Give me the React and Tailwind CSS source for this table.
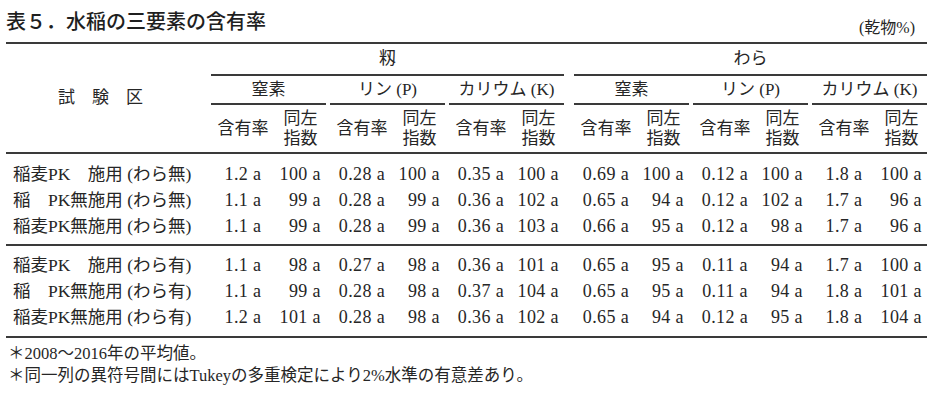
import React from 'react'

/* 表5 水稲の三要素の含有率 */
const SERIF = { fontFamily: '"Liberation Serif", "Noto Sans CJK JP", serif' }
const GOTHIC = { fontFamily: '"Noto Sans CJK JP", "Noto Sans", sans-serif' }

const ELEMENTS = ['窒素', 'リン (P)', 'カリウム (K)']

const ROWS_A = [
  { label: '稲麦PK　施用 (わら無)', v: ['1.2 a', '100 a', '0.28 a', '100 a', '0.35 a', '100 a', '0.69 a', '100 a', '0.12 a', '100 a', '1.8 a', '100 a'] },
  { label: '稲　PK無施用 (わら無)', v: ['1.1 a', '99 a', '0.28 a', '99 a', '0.36 a', '102 a', '0.65 a', '94 a', '0.12 a', '102 a', '1.7 a', '96 a'] },
  { label: '稲麦PK無施用 (わら無)', v: ['1.1 a', '99 a', '0.28 a', '99 a', '0.36 a', '103 a', '0.66 a', '95 a', '0.12 a', '98 a', '1.7 a', '96 a'] },
]

const ROWS_B = [
  { label: '稲麦PK　施用 (わら有)', v: ['1.1 a', '98 a', '0.27 a', '98 a', '0.36 a', '101 a', '0.65 a', '95 a', '0.11 a', '94 a', '1.7 a', '100 a'] },
  { label: '稲　PK無施用 (わら有)', v: ['1.1 a', '99 a', '0.28 a', '98 a', '0.37 a', '104 a', '0.65 a', '95 a', '0.11 a', '94 a', '1.8 a', '101 a'] },
  { label: '稲麦PK無施用 (わら有)', v: ['1.2 a', '101 a', '0.28 a', '98 a', '0.36 a', '102 a', '0.65 a', '94 a', '0.12 a', '95 a', '1.8 a', '104 a'] },
]

function HeadBlock({ title }) {
  return (
    <div className="w-[353px] flex flex-col">
      <div className="h-[32px] flex items-center justify-center border-b-2 border-[#3a3a3a]">{title}</div>
      <div className="flex gap-[4px]">
        {ELEMENTS.map(el => (
          <div key={el} className="w-[115px] flex flex-col">
            <div className="h-[29px] flex items-center justify-center border-b-2 border-[#3a3a3a]">{el}</div>
            <div className="h-[47px] flex">
              <div className="w-[64px] flex items-center justify-center">含有率</div>
              <div className="w-[51px] flex flex-col items-center justify-center leading-[20px]">
                <span>同左</span>
                <span>指数</span>
              </div>
            </div>
          </div>
        ))}
      </div>
    </div>
  )
}

function DataBlock({ vals }) {
  return (
    <div className="w-[353px] flex gap-[4px]">
      {[0, 1, 2].map(i => (
        <div key={i} className="w-[115px] flex text-[18px] tracking-[0.4px]">
          <div className="w-[64px] text-center whitespace-nowrap">{vals[i * 2]}</div>
          <div className="w-[51px] text-right pr-[5px] whitespace-nowrap">{vals[i * 2 + 1]}</div>
        </div>
      ))}
    </div>
  )
}

function Row({ r }) {
  return (
    <div className="flex h-[26px] items-center">
      <div className="w-[205px] pl-[7px] text-[17.5px] whitespace-nowrap">{r.label}</div>
      <DataBlock vals={r.v.slice(0, 6)} />
      <div className="w-[10px]" />
      <DataBlock vals={r.v.slice(6)} />
    </div>
  )
}

export default function App() {
  return (
    <div className="w-[943px] h-[403px] bg-white text-[#262626] pl-[6px] pr-[16px] overflow-hidden" style={SERIF}>
      {/* ── タイトル ── */}
      <div className="h-[42px] flex justify-between items-start">
        <div className="mt-[7px] text-[20px] leading-[28px] font-medium text-[#1f1f1f]" style={GOTHIC}>表５．水稲の三要素の含有率</div>
        <div className="mt-[17px] mr-[12px] text-[16px] leading-[22px]">(乾物%)</div>
      </div>

      {/* ── ヘッダー ── */}
      <div className="flex border-t-2 border-b-2 border-[#3a3a3a] text-[17px]">
        <div className="w-[205px] flex items-center justify-center pr-[16px]">試　験　区</div>
        <HeadBlock title="籾" />
        <div className="w-[10px]" />
        <HeadBlock title="わら" />
      </div>

      {/* ── データ ── */}
      <div className="pt-[7px] pb-[5px] border-b-2 border-[#3a3a3a]">
        {ROWS_A.map(r => <Row key={r.label} r={r} />)}
      </div>
      <div className="pt-[6px] pb-[6px] border-b-2 border-[#3a3a3a]">
        {ROWS_B.map(r => <Row key={r.label} r={r} />)}
      </div>

      {/* ── 注記 ── */}
      <div className="pt-[5px] pl-[2px] text-[16.5px] leading-[22px]">
        <div>＊2008〜2016年の平均値。</div>
        <div>＊同一列の異符号間にはTukeyの多重検定により2%水準の有意差あり。</div>
      </div>
    </div>
  )
}
